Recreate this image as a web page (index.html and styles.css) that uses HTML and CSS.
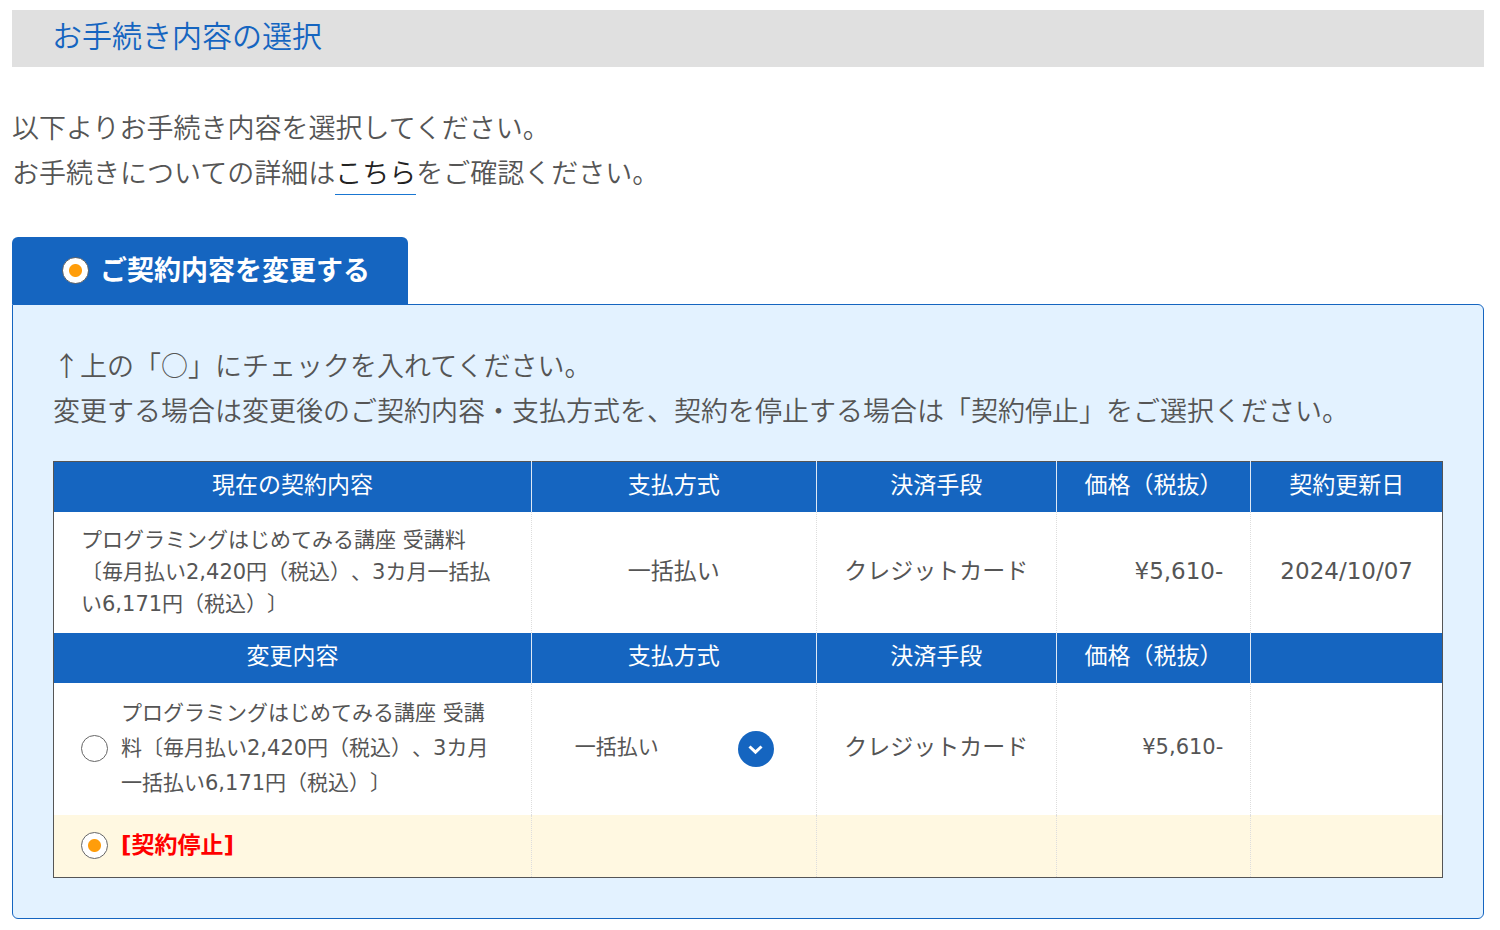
FILE: index.html
```html
<!DOCTYPE html>
<html lang="ja">
<head>
<meta charset="utf-8">
<meta name="viewport" content="width=device-width, initial-scale=1">
<title>お手続き内容の選択</title>
<link rel="stylesheet" href="styles.css">
</head>
<body>
<main>
  <h1 class="page-title">お手続き内容の選択</h1>
  <p class="lead">以下よりお手続き内容を選択してください。<br>お手続きについての詳細は<a class="lead-link" href="#">こちら</a>をご確認ください。</p>

  <form class="procedure">
    <label class="tab">
      <input class="radio" type="radio" name="procedure" checked>
      <span class="tab-label">ご契約内容を変更する</span>
    </label>
    <section class="panel">
      <p class="note">↑上の「○」にチェックを入れてください。<br>変更する場合は変更後のご契約内容・支払方式を、契約を停止する場合は「契約停止」をご選択ください。</p>
      <table class="contract">
        <colgroup>
          <col class="col-plan"><col class="col-method"><col class="col-means"><col class="col-price"><col class="col-date">
        </colgroup>
        <tbody>
          <tr class="head">
            <th scope="col">現在の契約内容</th>
            <th scope="col">支払方式</th>
            <th scope="col">決済手段</th>
            <th scope="col">価格（税抜）</th>
            <th scope="col">契約更新日</th>
          </tr>
          <tr class="current">
            <td class="plan">プログラミングはじめてみる講座 受講料〔毎月払い2,420円（税込）、3カ月一括払い6,171円（税込）〕</td>
            <td>一括払い</td>
            <td>クレジットカード</td>
            <td class="price">¥5,610-</td>
            <td>2024/10/07</td>
          </tr>
          <tr class="head">
            <th scope="col">変更内容</th>
            <th scope="col">支払方式</th>
            <th scope="col">決済手段</th>
            <th scope="col">価格（税抜）</th>
            <td></td>
          </tr>
          <tr class="change">
            <td class="plan">
              <label class="option">
                <input class="radio" type="radio" name="plan">
                <span>プログラミングはじめてみる講座 受講料〔毎月払い2,420円（税込）、3カ月一括払い6,171円（税込）〕</span>
              </label>
            </td>
            <td>
              <div class="select">
                <select aria-label="支払方式">
                  <option>一括払い</option>
                  <option>毎月払い</option>
                </select>
                <svg class="select-icon" viewBox="0 0 36 36" aria-hidden="true">
                  <circle cx="18" cy="18" r="18" fill="#1565c0"/>
                  <path d="M11.5 15.5 17.5 21.2 23.5 15.5" fill="none" stroke="#fff" stroke-width="3"/>
                </svg>
              </div>
            </td>
            <td>クレジットカード</td>
            <td class="price price-small">¥5,610-</td>
            <td></td>
          </tr>
          <tr class="stop">
            <td class="plan">
              <label class="option">
                <input class="radio" type="radio" name="plan" checked>
                <strong class="stop-label">[契約停止]</strong>
              </label>
            </td>
            <td></td>
            <td></td>
            <td></td>
            <td></td>
          </tr>
        </tbody>
      </table>
    </section>
  </form>
</main>
</body>
</html>
```
FILE: styles.css
```css
* {
  box-sizing: border-box;
}

body {
  margin: 10px 16px 11px 12px;
  background: #fff;
  color: #555;
  font-family: "Noto Sans CJK JP", sans-serif;
  font-size: 27px;
  font-weight: 350;
  line-height: 45px;
  text-spacing-trim: space-all;
}

.page-title {
  margin: 0;
  padding: 2px 40px 10px;
  background: #e0e0e0;
  color: #1565c0;
  font-size: 30px;
  font-weight: 350;
}

.lead {
  margin: 37px 0 42px;
}

.lead-link {
  display: inline-block;
  border-bottom: 1px solid #1976d2;
  color: #222;
  text-decoration: none;
}

.tab {
  display: inline-flex;
  align-items: center;
  gap: 11px;
  padding: 9px 38px 10px 50px;
  border-radius: 6px 6px 0 0;
  background: #1565c0;
  color: #fff;
  font-weight: 700;
  vertical-align: top;
}

.tab-label {
  padding-bottom: 3px;
}

.radio {
  appearance: none;
  flex: none;
  width: 27px;
  height: 27px;
  margin: 0;
  border: 1px solid #666;
  border-radius: 50%;
  background: #fff;
}

.radio:checked {
  background: radial-gradient(circle, #ff9d0a 6px, #fff 7px);
}

.panel {
  padding: 37px 40px 40px;
  border: 1px solid #1565c0;
  border-radius: 0 6px 6px 6px;
  background: #e3f2ff;
}

.note {
  margin: 0 0 29px;
}

.contract {
  width: 100%;
  table-layout: fixed;
  border: 1px solid #555;
  border-collapse: collapse;
  background: #fff;
  font-family: "DejaVu Sans", "Noto Sans CJK JP", sans-serif;
  font-size: 23px;
  font-weight: 400;
  line-height: 32px;
  text-align: center;
}

.col-plan { width: 34.4%; }
.col-method { width: 20.5%; }
.col-means { width: 17.3%; }
.col-price { width: 14%; }
.col-date { width: 13.8%; }

.contract th,
.contract td {
  padding: 7px 0 11px;
  font-weight: 400;
}

.contract td + td {
  border-left: 1px dotted #ddd;
}

.head {
  background: #1565c0;
  color: #fff;
}

.contract .head > * + * {
  border-left: 1px solid #dde8f5;
}

.contract .plan {
  padding: 12px 27px 13px;
  font-size: 21px;
  text-align: left;
}

.contract .price {
  padding-right: 27px;
  text-align: right;
}

.contract .price-small {
  font-size: 21px;
}

.option {
  display: flex;
  align-items: center;
  gap: 13px;
}

.change .option {
  line-height: 35px;
}

.contract .change .plan {
  padding: 13px 27px 14px;
}

.stop {
  background: #fff8e1;
}

.contract .stop .plan {
  padding: 14px 27px 16px;
}

.stop-label {
  color: #f00;
  font-size: 23px;
  font-weight: 700;
}

.select {
  position: relative;
  margin: 0 27px;
}

.select select {
  appearance: none;
  display: block;
  width: 100%;
  height: 44px;
  padding: 0 56px 0 16px;
  border: 0;
  background: transparent;
  color: inherit;
  font-family: inherit;
  font-size: 21px;
  font-weight: 400;
}

.select-icon {
  position: absolute;
  top: 6px;
  right: 15px;
  width: 36px;
  height: 36px;
  pointer-events: none;
}
```
